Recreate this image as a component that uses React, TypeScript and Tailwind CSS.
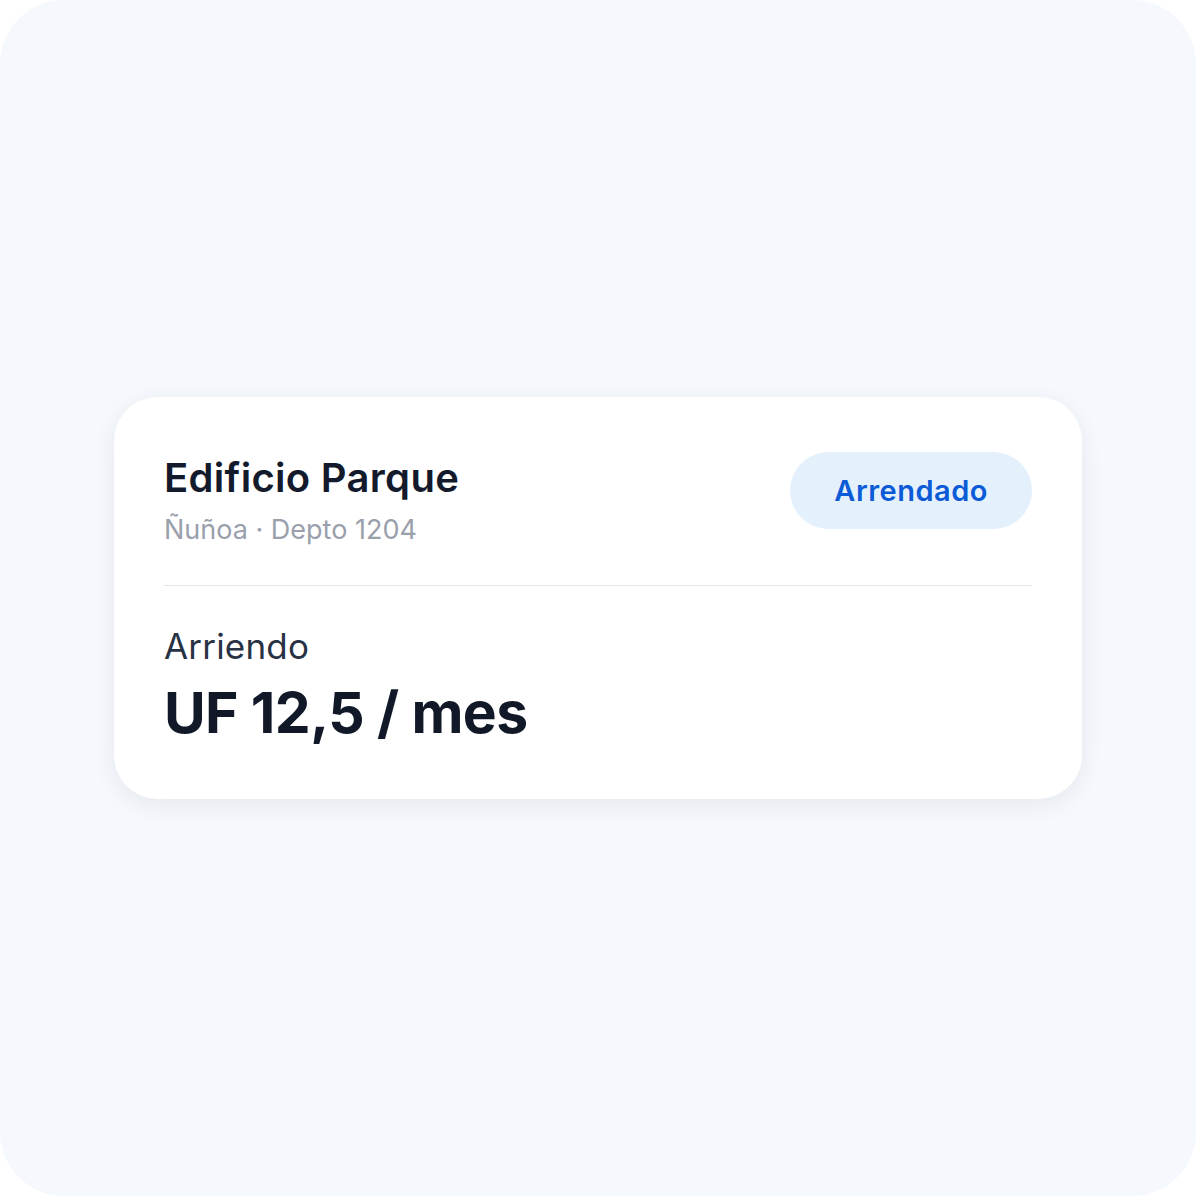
import React from "react";

const App: React.FC = () => {
  return (
    <div className="w-[1196px] h-[1196px] bg-white">
      <div
        className="w-full h-full rounded-[64px] bg-[#f5f8fc] flex items-center justify-center"
        style={{ fontFamily: "Inter, 'Noto Sans', sans-serif" }}
      >
        {/* Tarjeta de propiedad */}
        <div className="w-[968px] bg-white rounded-[44px] shadow-[0_6px_24px_rgba(30,41,59,0.07)] px-[50px] pt-[54px] pb-[52px]">
          <div className="flex items-start justify-between">
            <div className="pt-[3px]">
              <h1 className="text-[40px] leading-[48px] font-semibold text-[#131a2b] tracking-[0.3px]">
                Edificio Parque
              </h1>
              <p className="mt-[10px] text-[27px] leading-[36px] text-[#9aa0ab]">
                Ñuñoa · Depto 1204
              </p>
            </div>
            <span className="mt-[1px] h-[77px] px-[44px] flex items-center rounded-full bg-[#e5f0fd] text-[#0b5bd6] text-[29px] font-semibold tracking-[0.5px]">
              Arrendado
            </span>
          </div>

          <div className="h-px bg-[#e5e7eb] mt-[37px] mb-[37px]" />

          <p className="text-[35px] leading-[46px] text-[#283244] tracking-[0.2px]">Arriendo</p>
          <p className="mt-[10px] text-[57px] leading-[68px] font-bold text-[#111827] tracking-[-0.6px]">
            UF 12,5 / mes
          </p>
        </div>
      </div>
    </div>
  );
};

export default App;
